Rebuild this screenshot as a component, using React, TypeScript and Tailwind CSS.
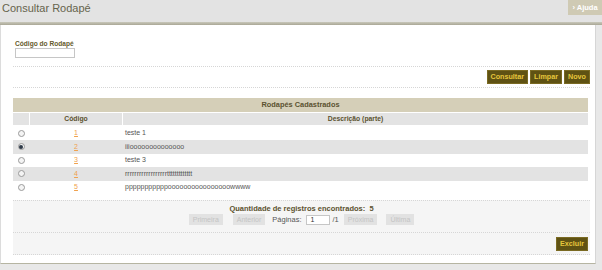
import React from "react";

const rows = [
  { code: "1", desc: "teste 1", checked: false },
  { code: "2", desc: "iiioooooooooooooo", checked: true },
  { code: "3", desc: "teste 3", checked: false },
  { code: "4", desc: "rrrrrrrrrrrrrrrrrrttttttttttttt", checked: false },
  { code: "5", desc: "pppppppppppoooooooooooooooowwww", checked: false },
];

function Radio({ checked }: { checked: boolean }) {
  return (
    <span className="inline-flex w-[7px] h-[7px] rounded-full border border-[#9a9a9a] bg-[#f4f4f4] items-center justify-center">
      {checked && <span className="w-[4px] h-[4px] rounded-full bg-[#2f3a48]" />}
    </span>
  );
}

function Btn({ children }: { children: React.ReactNode }) {
  return (
    <span className="h-[14px] px-[3px] flex items-center bg-[#5f5213] border border-[#7a6a22] text-[#e6c63c] text-[7.2px] font-bold leading-none">
      {children}
    </span>
  );
}

function PgBtn({ children }: { children: React.ReactNode }) {
  return (
    <span className="h-[11px] px-[4px] flex items-center bg-[#e2e2e2] text-[#c4c4c4] text-[7px] leading-none">
      {children}
    </span>
  );
}

export default function App() {
  return (
    <div
      className="w-[602px] h-[270px] bg-[#e8e8e8] flex flex-col overflow-hidden"
      style={{ fontFamily: '"Liberation Sans", Arial, sans-serif' }}
    >
      {/* header */}
      <div className="h-[22px] bg-[#e3e3e3] flex justify-between items-start">
        <span className="pl-[2px] pt-[1px] text-[11px] leading-[15px] text-[#66634d]">Consultar Rodapé</span>
        <span className="w-[34px] h-[15px] bg-[#cfcab4] text-white text-[7.5px] font-bold flex items-center justify-center">
          › Ajuda
        </span>
      </div>
      <div className="h-[3px] bg-gradient-to-b from-[#c9c8bb] to-[#a9a795]" />

      {/* panel */}
      <div className="h-[239px] mr-[6px] bg-white border-l border-r border-b border-l-[#dcdcdc] border-r-[#d6d6d6] border-b-[#b6b5a2] pl-[12px] pr-[5px] flex flex-col">
        <div className="mt-[14px] ml-[2px] text-[6.6px] leading-[9px] font-bold text-[#655a2c]">Código do Rodapé</div>
        <div className="ml-[2px] w-[60px] h-[10px] border border-[#c6c6c6] bg-white" />

        <div className="mt-[8px] border-t border-dotted border-[#d6d6d6]" />
        <div className="mt-[3px] flex justify-end gap-[2px]">
          <Btn>Consultar</Btn>
          <Btn>Limpar</Btn>
          <Btn>Novo</Btn>
        </div>
        <div className="mt-[3px] border-t border-dotted border-[#d6d6d6]" />

        {/* table */}
        <div className="mt-[10px] mr-[2px] flex flex-col">
          <div className="h-[14px] bg-[#d5cfb8] flex items-center justify-center text-[7.4px] font-bold text-[#5b5230]">
            Rodapés Cadastrados
          </div>
          <div className="mt-[1px] h-[12px] flex gap-[1px] text-[6.8px] font-bold text-[#5b5230]">
            <div className="w-[16px] bg-[#e3e3e3]" />
            <div className="w-[92px] bg-[#e3e3e3] flex items-center justify-center">Código</div>
            <div className="flex-1 bg-[#e3e3e3] flex items-center justify-center">Descrição (parte)</div>
          </div>
          <div className="mt-[1.5px]">
            {rows.map((r, i) => (
              <div
                key={r.code}
                className={`h-[13.5px] flex gap-[1px] items-center text-[7px] ${i % 2 === 1 ? "bg-[#e3e3e3]" : "bg-white"}`}
              >
                <div className="w-[16px] flex items-center justify-center">
                  <Radio checked={r.checked} />
                </div>
                <div className="w-[92px] flex justify-center">
                  <span className="text-[#f0a24e] underline">{r.code}</span>
                </div>
                <div className="flex-1 pl-[2px] text-[#555555]">{r.desc}</div>
              </div>
            ))}
          </div>
        </div>

        {/* pagination */}
        <div className="mt-[6px] h-[32px] bg-[#f5f5f5] border-t border-dotted border-[#d6d6d6] flex flex-col items-center">
          <div className="mt-[3px] text-[7.5px] leading-[9px] font-bold text-[#5b5230] whitespace-pre">
            Quantidade de registros encontrados:  5
          </div>
          <div className="mt-[1px] flex items-center text-[7.5px] text-[#555]">
            <PgBtn>Primeira</PgBtn>
            <span className="w-[10px]" />
            <PgBtn>Anterior</PgBtn>
            <span className="ml-[7px]">Páginas:</span>
            <span className="ml-[5px] w-[24px] h-[10px] border border-[#c6c6c6] bg-white text-[7px] leading-[8px] pl-[3px] text-[#333]">1</span>
            <span className="ml-[2px]">/1</span>
            <span className="w-[5px]" />
            <PgBtn>Próxima</PgBtn>
            <span className="w-[9px]" />
            <PgBtn>Última</PgBtn>
          </div>
        </div>
        <div className="h-[23px] bg-[#f5f5f5] border-t border-b border-dotted border-[#d6d6d6] flex items-center justify-end pr-[2px]">
          <Btn>Excluir</Btn>
        </div>
      </div>
    </div>
  );
}
